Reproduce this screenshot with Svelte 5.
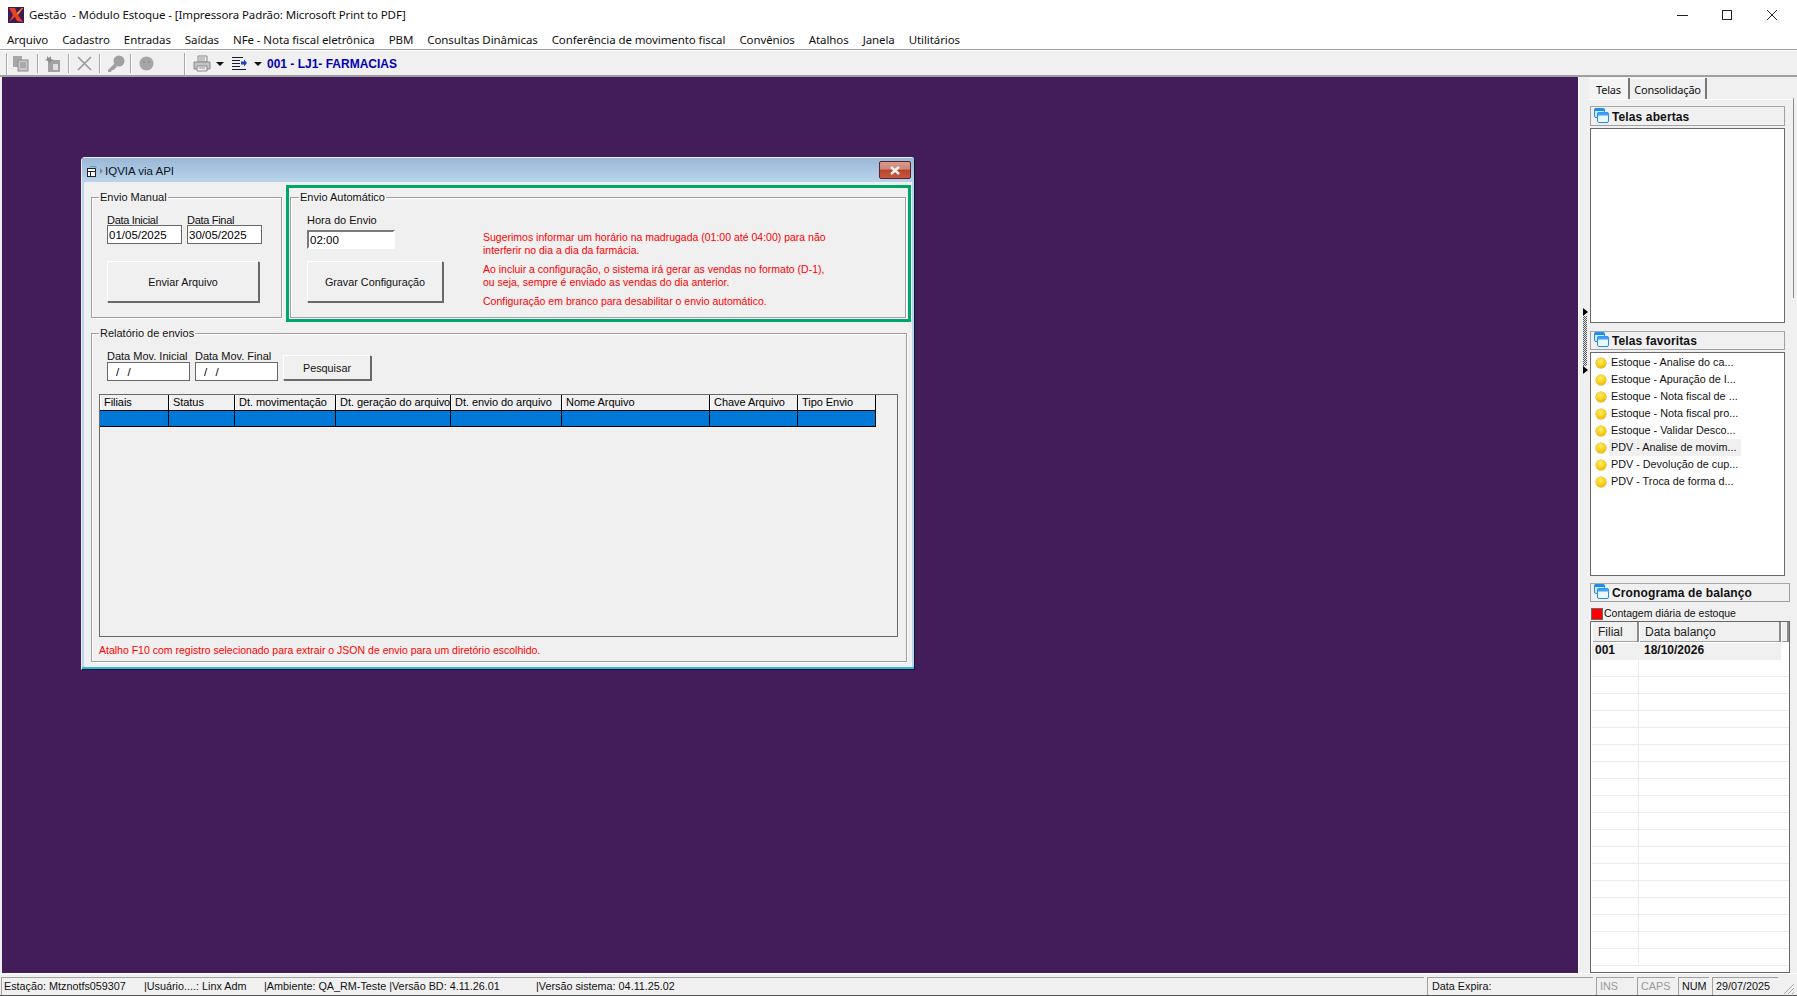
<script>
  const menus = ['Arquivo','Cadastro','Entradas','Saídas','NFe - Nota fiscal eletrônica','PBM','Consultas Dinâmicas','Conferência de movimento fiscal','Convênios','Atalhos','Janela','Utilitários'];
  const cols = [['Filiais',69],['Status',66],['Dt. movimentação',101],['Dt. geração do arquivo',115],['Dt. envio do arquivo',111],['Nome Arquivo',148],['Chave Arquivo',88],['Tipo Envio',78]];
  const template = cols.map((c) => c[1] + 'px').join(' ');
  const favs = ['Estoque - Analise do ca...','Estoque - Apuração de I...','Estoque - Nota fiscal de ...','Estoque - Nota fiscal pro...','Estoque - Validar Desco...','PDV - Analise de movim...','PDV - Devolução de cup...','PDV - Troca de forma d...'];
  const blankRows = Array.from({ length: 18 });
</script>

{#snippet winIcon()}
  <svg class="panel-icon" width="15" height="15" viewBox="0 0 15 15">
    <rect x="0.5" y="0.5" width="10" height="9" rx="1.5" fill="#cfe6fb" stroke="#1f8cf0"/>
    <rect x="0.5" y="0.5" width="10" height="2.5" fill="#1f8cf0"/>
    <rect x="3.5" y="4.5" width="11" height="10" rx="1.5" fill="#eef6fd" stroke="#1f8cf0"/>
    <rect x="3.5" y="4.5" width="11" height="3" fill="#3ea0f5"/>
  </svg>
{/snippet}

<div class="app">
  <header class="titlebar">
    <svg class="logo" width="16" height="16" viewBox="0 0 16 16">
      <rect width="16" height="16" fill="#3b1a5c"/>
      <path d="M1 1 L7 1 L9 6 L14 1 L15 1 L10 8 L15 15 L9 14 L7 10 L1 15 L5 8 Z" fill="#e8431f"/>
      <path d="M9 6 L14 1 L15 1 L10 8 Z" fill="#f7a01c"/>
    </svg>
    <span class="title-text">Gestão  - Módulo Estoque - [Impressora Padrão: Microsoft Print to PDF]</span>
    <div class="win-controls">
      <svg width="12" height="12" viewBox="0 0 12 12"><path d="M1 6.5H12" stroke="#222"/></svg>
      <svg width="12" height="12" viewBox="0 0 12 12"><rect x="1.5" y="1.5" width="9" height="9" fill="none" stroke="#222"/></svg>
      <svg width="12" height="12" viewBox="0 0 12 12"><path d="M1 1L11 11M11 1L1 11" stroke="#222"/></svg>
    </div>
  </header>

  <nav class="menubar">
    {#each menus as m}<span>{m}</span>{/each}
  </nav>

  <div class="toolbar">
    <i class="sep grip"></i>
    <svg class="tool t1" width="17" height="17" viewBox="0 0 17 17"><rect x="1" y="1" width="9" height="11" fill="#a8a8a8"/><rect x="6" y="5" width="10" height="11" fill="#c8c8c8" stroke="#8a8a8a"/><path d="M8 8h6M8 10h6M8 12h6" stroke="#8a8a8a"/></svg>
    <i class="sep s1"></i>
    <svg class="tool t2" width="16" height="18" viewBox="0 0 16 18"><rect x="3" y="5" width="12" height="12" fill="#a2a2a2"/><path d="M2 1l2 2 2-2v3l3 1-3 1-2 3-1-3-3-1 2-1z" fill="#8f8f8f"/><rect x="8" y="9" width="5" height="6" fill="#dedede"/></svg>
    <i class="sep s2"></i>
    <svg class="tool t3" width="15" height="15" viewBox="0 0 15 15"><path d="M1 1L14 14M14 1L1 14" stroke="#999" stroke-width="1.6"/></svg>
    <i class="sep s3"></i>
    <svg class="tool t4" width="18" height="18" viewBox="0 0 18 18"><circle cx="12" cy="6" r="5.5" fill="#a0a0a0"/><path d="M8 8L1 15v2h3l1-2h2l1-2h1l1-3z" fill="#a0a0a0"/></svg>
    <i class="sep s4"></i>
    <svg class="tool t5" width="15" height="15" viewBox="0 0 15 15"><circle cx="7.5" cy="7.5" r="7" fill="#a6a6a6"/><circle cx="5" cy="6" r="1" fill="#8a8a8a"/><circle cx="10" cy="6" r="1" fill="#8a8a8a"/></svg>
    <i class="sep s5"></i>
    <svg class="tool t6" width="18" height="17" viewBox="0 0 18 17"><path d="M5 1h9v6H5z" fill="#eee" stroke="#888"/><path d="M1 7h16v7H1z" fill="#c4c4c4" stroke="#888"/><path d="M4 11h10v5H4z" fill="#eee" stroke="#888"/><path d="M6 3h6M6 5h6M6 13h6" stroke="#999"/></svg>
    <i class="caret c1"></i>
    <svg class="tool t7" width="15" height="15" viewBox="0 0 15 15"><path d="M0 1.5h11M0 4.5h8M0 7.5h8M0 10.5h8M0 13.5h14" stroke="#1a1a33"/><path d="M9 5.5h3V3.5l3 3.5-3 3.5V8.500H9z" fill="#1c3fc4"/></svg>
    <i class="caret c2"></i>
    <span class="loja">001 - LJ1- FARMACIAS</span>
  </div>

  <div class="main">
    <section class="desktop">
      <article class="window">
        <div class="win-title">
          <svg width="11" height="11" viewBox="0 0 11 11"><rect x="0.500" y="2.500" width="8" height="8" fill="#fff" stroke="#222"/><path d="M0.500 5.500h8M3.500 5.500v5" stroke="#222"/><path d="M3 0.500h6v2" fill="none" stroke="#4aa3c9"/></svg>
          <i class="mini-arrow"></i>
          <span>IQVIA via API</span>
          <button class="close" aria-label="Fechar">
            <svg width="12" height="9" viewBox="0 0 12 9"><path d="M2 1l8 7M10 1L2 8" stroke="#f4f4f4" stroke-width="2.400"/></svg>
          </button>
        </div>
        <div class="win-body">
          <div class="top-row">
            <fieldset class="group manual">
              <legend>Envio Manual</legend>
              <div class="fields">
                <label class="field">Data Inicial<input class="flat w75" readonly value="01/05/2025"/></label>
                <label class="field">Data Final<input class="flat w75" readonly value="30/05/2025"/></label>
              </div>
              <button class="btn big send">Enviar Arquivo</button>
            </fieldset>
            <div class="highlight">
              <fieldset class="group auto">
                <legend>Envio Automático</legend>
                <div class="auto-left">
                  <label class="field">Hora do Envio<input class="sunken" readonly value="02:00"/></label>
                  <button class="btn big save">Gravar Configuração</button>
                </div>
                <div class="notes">
                  <p>Sugerimos informar um horário na madrugada (01:00 até 04:00) para não<br/>interferir no dia a dia da farmácia.</p>
                  <p>Ao incluir a configuração, o sistema irá gerar as vendas no formato (D-1),<br/>ou seja, sempre é enviado as vendas do dia anterior.</p>
                  <p>Configuração em branco para desabilitar o envio automático.</p>
                </div>
              </fieldset>
            </div>
          </div>

          <fieldset class="group report">
            <legend>Relatório de envios</legend>
            <div class="search">
              <label class="field">Data Mov. Inicial<input class="flat w83 mask" readonly value="/  /"/></label>
              <label class="field">Data Mov. Final<input class="flat w83 mask" readonly value="/  /"/></label>
              <button class="btn search-btn">Pesquisar</button>
            </div>
            <div class="grid">
              <div class="grid-row head" style:grid-template-columns={template}>
                {#each cols as c}<span>{c[0]}</span>{/each}
              </div>
              <div class="grid-row sel" style:grid-template-columns={template}>
                {#each cols as c}<span></span>{/each}
              </div>
            </div>
            <p class="hint">Atalho F10 com registro selecionado para extrair o JSON de envio para um diretório escolhido.</p>
          </fieldset>
        </div>
      </article>
    </section>

    <aside class="side">
      <div class="splitter"><i class="tri top"></i><i class="dots"></i><i class="tri bot"></i></div>
      <div class="page-line"></div>
      <div class="tabs">
        <span class="tab active">Telas</span>
        <span class="tab">Consolidação</span>
      </div>
      <div class="panel-head first">{@render winIcon()}<b>Telas abertas</b></div>
      <div class="list open"></div>
      <div class="panel-head second">{@render winIcon()}<b>Telas favoritas</b></div>
      <ul class="list favs">
        {#each favs as f, i}
          <li class:hover={i === 5}><i class="dot"></i><span>{f}</span></li>
        {/each}
      </ul>
      <div class="panel-head third">{@render winIcon()}<b>Cronograma de balanço</b></div>
      <div class="legend-row"><i class="red"></i>Contagem diária de estoque</div>
      <div class="sched">
        <div class="sched-head"><span class="c-a">Filial</span><span class="c-b">Data balanço</span><span class="c-c"></span></div>
        <div class="sched-row first-row"><b class="c-a">001</b><b class="c-b">18/10/2026</b></div>
        {#each blankRows as _}
          <div class="sched-row"><span class="c-a"></span><span class="c-b"></span></div>
        {/each}
      </div>
    </aside>
  </div>

  <footer class="status">
    <div class="st info">
      <span class="i1">Estação: Mtznotfs059307</span>
      <span class="i2">|Usuário....: Linx Adm</span>
      <span class="i3">|Ambiente: QA_RM-Teste |Versão BD: 4.11.26.01</span>
      <span class="i4">|Versão sistema: 04.11.25.02</span>
    </div>
    <div class="st expira">Data Expira:</div>
    <div class="st ins off">INS</div>
    <div class="st caps off">CAPS</div>
    <div class="st num">NUM</div>
    <div class="st date">29/07/2025</div>
    <svg class="resize" width="13" height="13" viewBox="0 0 13 13"><path d="M12 2L2 12M12 6L6 12M12 10L10 12" stroke="#a8a8a8"/></svg>
  </footer>
</div>

<style>
  :global(body) { margin: 0; background: #f0f0f0; }
  .app {
    width: 1797px; height: 996px; display: flex; flex-direction: column; overflow: hidden;
    font: 11px/13px "Liberation Sans", Arial, sans-serif; color: #000; background: #f0f0f0;
  }
  .titlebar { height: 28px; flex: none; display: flex; align-items: center; background: #fff; padding: 1px 0 0 8px; box-sizing: border-box; }
  .title-text { margin-left: 5px; font: 11.5px "Noto Sans", sans-serif; white-space: pre; color: #111; letter-spacing: -0.1px; }
  .win-controls { margin-left: auto; display: flex; gap: 33px; padding-right: 19px; }
  .menubar { height: 22px; flex: none; display: flex; gap: 14px; align-items: center; padding: 2px 0 0 7px; background: #fff; font: 11.5px "Noto Sans", sans-serif; color: #111; box-sizing: border-box; border-bottom: 1px solid #a0a0a0; letter-spacing: -0.09px; }
  .toolbar { height: 27px; flex: none; box-sizing: border-box; display: flex; align-items: center; padding-top: 1px; background: #f0f0f0; border-top: 1px solid #fff; border-bottom: 2px solid #a0a0a0; }
  .sep { width: 1px; height: 19px; background: #a8a8a8; box-shadow: 1px 0 0 #fff; flex: none; }
  .grip { margin-left: 6px; height: 22px; }
  .tool { flex: none; }
  .t1 { margin-left: 5px; } .s1 { margin-left: 8px; }
  .t2 { margin-left: 7px; } .s2 { margin-left: 7px; }
  .t3 { margin-left: 8px; } .s3 { margin-left: 7px; }
  .t4 { margin-left: 7px; } .s4 { margin-left: 5px; }
  .t5 { margin-left: 8px; } .s5 { margin-left: 30px; height: 22px; }
  .t6 { margin-left: 8px; }
  .caret { width: 0; height: 0; border: 4px solid transparent; border-top: 4px solid #111; border-bottom: 0; flex: none; }
  .c1 { margin-left: 5px; }
  .t7 { margin-left: 8px; }
  .c2 { margin-left: 7px; }
  .loja { margin-left: 5px; font: bold 12px/14px "Liberation Sans", sans-serif; color: #0000b4; white-space: nowrap; }

  .main { flex: 1; display: flex; min-height: 0; }
  .desktop { flex: none; width: 1576px; margin-left: 2px; background: #431d5a; position: relative; }
  .window {
    position: absolute; left: 79px; top: 80px; width: 834px; height: 513px; box-sizing: border-box;
    background: #f0f0f0; border: 1px solid #0f1a26; border-top-color: #e9eef3; border-left-color: #e9eef3; border-radius: 4px 4px 0 0;
    box-shadow: inset 0 -2px 0 #34b5dc, inset 2px 0 0 #b8d5ef, inset -2px 0 0 #b8d5ef;
    display: flex; flex-direction: column;
  }
  .win-title { height: 24px; flex: none; display: flex; align-items: center; padding: 0 3px 0 5px; background: linear-gradient(#9ab7d6, #b9d4ec); font-size: 11.5px; }
  .win-title span { margin: 2px 0 0 2px; color: #0c1420; }
  .win-title > svg { margin-top: 2px; }
  .mini-arrow { width: 0; height: 0; margin: 2px 0 0 2px; border: 3px solid transparent; border-left: 3px solid #888; border-right: 0; }
  .close { margin-left: auto; width: 32px; height: 18px; padding: 0; border: 1px solid #5a2230; border-radius: 2px; display: flex; align-items: center; justify-content: center; background: linear-gradient(#d89a8c 0, #cf8677 45%, #b8432c 50%, #c75a3f 100%); }
  .win-body { flex: 1; padding: 3px 3px 0 9px; display: flex; flex-direction: column; min-height: 0; }
  .top-row { display: flex; gap: 4px; align-items: flex-start; height: 137px; }
  .group { margin: 0; padding: 0; border: 1px solid #a0a0a0; box-shadow: 1px 1px 0 #fff, inset 1px 1px 0 #fff; min-width: 0; box-sizing: border-box; }
  legend { padding: 0 1px; line-height: 14px; color: #111; }
  .manual legend, .report legend { margin-left: -8px; }
  .auto legend { margin-left: -8px; }
  .manual { width: 192px; height: 128px; margin-top: 5px; padding: 11px 0 0 15px; }
  .fields { display: flex; gap: 5px; }
  .fields .field { letter-spacing: -0.3px; }
  .fields .flat { margin-top: -1px; }
  .field { display: flex; flex-direction: column; color: #111; line-height: 11px; }
  .flat { box-sizing: border-box; height: 19px; border: 1px solid #696969; background: #fff; padding: 0 1px; font: 11.5px "Liberation Sans", sans-serif; letter-spacing: 0; color: #000; outline: 0; }
  .w75 { width: 75px; }
  .w83 { width: 83px; }
  .mask { padding-left: 8px; word-spacing: 1px; }
  .btn { box-sizing: border-box; font: 10.8px "Liberation Sans", sans-serif; color: #111; background: #f0f0f0; border: 1px solid; border-color: #fff #696969 #696969 #fff; box-shadow: 1px 1px 0 #696969; padding: 0; }
  .big { height: 41px; display: block; }
  .send { width: 152px; margin-top: 17px; }
  .highlight { width: 625px; height: 137px; box-sizing: border-box; border: 3px solid #00a66a; padding: 2px 2px 0 1px; }
  .auto { width: 616px; height: 128px; display: flex; padding: 11px 0 0 16px; }
  .auto-left { width: 176px; flex: none; }
  .sunken { display: block; box-sizing: border-box; width: 88px; height: 19px; margin-top: 4px; padding: 1px 0 0 1px; font: 11.5px "Liberation Sans", sans-serif; background: #fff; color: #000; outline: 0; border: 2px solid; border-color: #7a7a7a #fff #fff #7a7a7a; }
  .save { width: 136px; margin-top: 12px; }
  .notes { color: #ff0000; padding-top: 16px; font-size: 10.5px; line-height: 13px; white-space: nowrap; }
  .notes p { margin: 0 0 6px; }

  .report { width: 816px; height: 336px; margin-top: 4px; padding: 10px 0 0 15px; }
  .search { display: flex; gap: 5px; align-items: flex-end; }
  .search .field { line-height: 12px; }
  .search-btn { width: 88px; height: 25px; margin-bottom: 1px; }
  .grid { width: 799px; height: 243px; margin: 13px 0 0 -8px; box-sizing: border-box; border: 1px solid #696969; }
  .grid-row { display: grid; width: 776px; }
  .grid-row span { box-sizing: border-box; border-right: 1px solid #000; border-bottom: 1px solid #000; }
  .head span { height: 16px; padding: 1px 0 0 4px; white-space: nowrap; overflow: hidden; box-shadow: inset 1px 0 0 #fff; line-height: 13px; letter-spacing: -0.05px; }
  .sel span { height: 16px; background: #0078d7; }
  .hint { margin: 7px 0 0 -8px; color: #ff0000; font-size: 10.5px; line-height: 13px; white-space: nowrap; }

  .side { flex: 1; position: relative; padding: 1px 0 0 11px; box-sizing: border-box; background: #f0f0f0; border-left: 1px solid #fff; }
  .splitter { position: absolute; left: 2px; top: 231px; width: 8px; height: 68px; display: flex; flex-direction: column; align-items: center; }
  .tri { width: 0; height: 0; border: 4px solid transparent; border-left: 5px solid #000; border-right: 0; flex: none; margin-left: 1px; }
  .dots { width: 4px; height: 50px; flex: none; background: repeating-conic-gradient(#555 0 25%, #e8e8e8 0 50%) 0 0 / 2px 2px; }
  .page-line { position: absolute; left: 214px; top: 21px; width: 1px; height: 200px; background: #8c8c8c; }
  .tabs { display: flex; height: 21px; border-bottom: 1px solid #fff; width: 205px; margin-left: -1px; }
  .tab { box-sizing: border-box; padding: 5px 0 0; text-align: center; font: 11px/14px "Noto Sans", sans-serif; letter-spacing: -0.2px; color: #111; width: 77px; border-right: 2px solid #777; box-shadow: inset 0 1px 0 #fff; }
  .tab.active { width: 41px; background: #f4f4f4; }
  .panel-head { box-sizing: border-box; height: 20px; display: flex; align-items: center; padding-left: 3px; border: 1px solid #a0a0a0; border-top-color: #a8a8a8; background: #f0f0f0; width: 195px; }
  .panel-head b { margin-left: 3px; padding-top: 1px; font: bold 12px "Liberation Sans", sans-serif; letter-spacing: 0.12px; color: #111; white-space: nowrap; }
  .panel-icon { flex: none; margin-top: -2px; }
  .first { margin-top: 6px; }
  .second { margin-top: 8px; height: 19px; }
  .third { margin-top: 7px; height: 19px; width: 200px; }
  .list { box-sizing: border-box; width: 195px; margin: 2px 0 0; padding: 0; background: #fff; border: 1px solid #696969; list-style: none; }
  .open { height: 195px; }
  .favs { height: 224px; padding-top: 1px; }
  .favs li { height: 17px; display: flex; align-items: center; padding-left: 5px; color: #111; font-size: 10.8px; position: relative; white-space: nowrap; }
  .favs span { margin-left: 5px; }
  .favs li.hover::before { content: ""; position: absolute; left: 18px; width: 132px; top: 0; bottom: 0; background: #f0f0f0; }
  .favs li span, .dot { position: relative; }
  .dot { width: 10px; height: 10px; border-radius: 50%; flex: none; background: radial-gradient(circle at 45% 35%, #fff27a, #ffcb05 55%, #c99a00); box-shadow: 0 0 0 0.5px #c8a100; }
  .legend-row { display: flex; align-items: center; height: 15px; margin-top: 4px; color: #111; font-size: 10.5px; white-space: nowrap; }
  .red { width: 12px; height: 12px; background: #ff0000; border: 1px solid #696969; box-sizing: border-box; margin: 0 1px 0 1px; flex: none; }
  .sched { box-sizing: border-box; width: 200px; height: 352px; background: #fff; border: 1px solid #696969; overflow: hidden; padding-left: 1px; }
  .sched-head { box-sizing: border-box; display: flex; height: 20px; background: #f0f0f0; border-bottom: 1px solid #a0a0a0; font: 12px/20px "Liberation Sans", sans-serif; color: #222; }
  .sched-head span { box-sizing: border-box; border-right: 2px solid #8c8c8c; border-left: 1px solid #fff; padding-left: 5px; height: 20px; }
  .c-a { width: 47px; flex: none; box-sizing: border-box; }
  .c-b { width: 142px; flex: none; box-sizing: border-box; }
  .c-c { flex: 1; }
  .sched-row { display: flex; height: 17px; border-bottom: 1px solid #ececec; box-sizing: border-box; }
  .sched-row .c-a { border-right: 1px solid #ececec; padding-left: 3px; }
  .sched-row .c-b { padding-left: 5px; }
  .sched-row b { font: bold 12px/15px "Liberation Sans", sans-serif; color: #111; }
  .first-row { margin-top: 1px; background: #f0f0f0; width: 189px; border-bottom: 0; }
  .first-row .c-a { border-right: 0; }

  .status { height: 23px; flex: none; box-sizing: border-box; display: flex; gap: 3px; padding: 3px 0 0 1px; background: #f0f0f0; border-top: 1px solid #fff; border-bottom: 1px solid #555; position: relative; font-size: 10.8px; }
  .st { box-sizing: border-box; height: 18px; border-top: 1px solid #a0a0a0; border-left: 1px solid #a0a0a0; line-height: 17px; padding-left: 3px; white-space: nowrap; color: #111; }
  .info { width: 1423px; display: flex; padding-left: 2px; }
  .i1 { width: 140px; } .i2 { width: 120px; } .i3 { width: 272px; }
  .expira { width: 166px; padding-left: 4px; }
  .ins { width: 38px; } .caps { width: 38px; } .num { width: 31px; } .date { width: 66px; }
  .off { color: #9a9a9a; }
  .resize { position: absolute; right: 2px; bottom: 0; }
</style>
